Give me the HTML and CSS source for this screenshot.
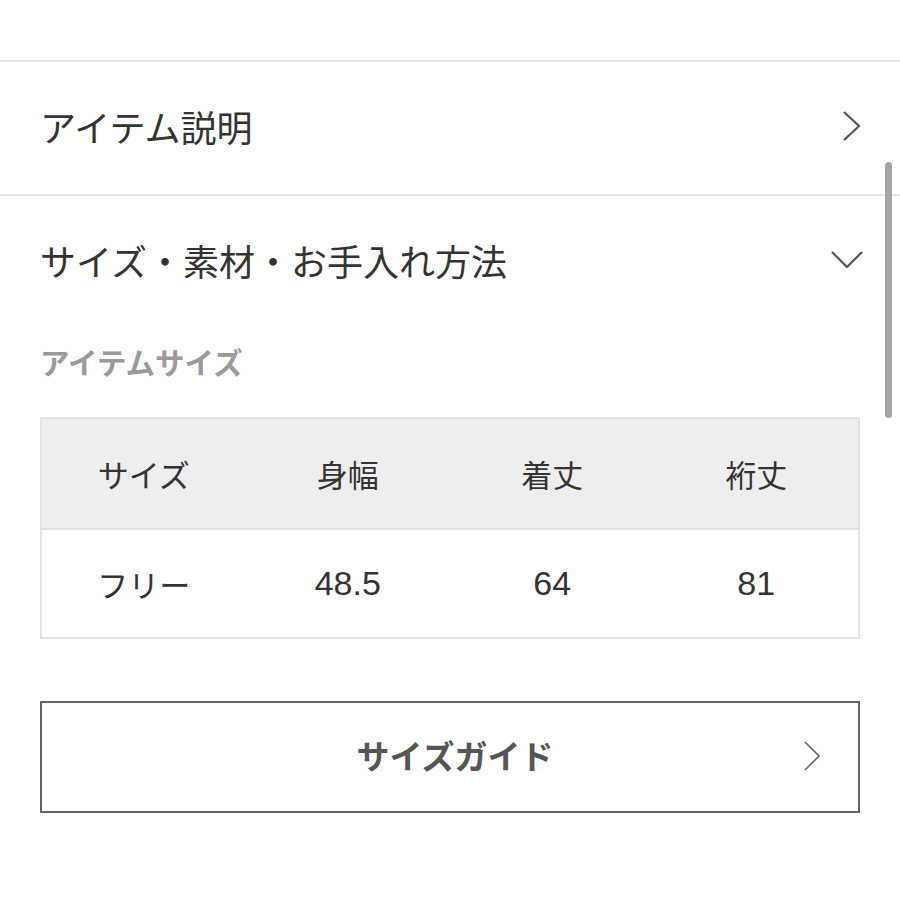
FILE: index.html
```html
<!DOCTYPE html>
<html lang="ja">

<head>
    <meta charset="UTF-8">
    <meta name="viewport" content="width=device-width, initial-scale=1.0">
    <title>アイテム詳細</title>
    <link rel="stylesheet" href="styles.css">
</head>

<body>
    <div class="page">
        <div class="accordion">
            <div class="acc-head">
                <span class="acc-title">アイテム説明</span>
                <svg class="chev-right" width="20" height="32" viewBox="0 0 20 32">
                    <path d="M2 2 L17 16 L2 30" fill="none" stroke="#555" stroke-width="2.2" />
                </svg>
            </div>
        </div>

        <div class="accordion open">
            <div class="acc-head">
                <span class="acc-title">サイズ・素材・お手入れ方法</span>
                <svg class="chev-down" width="34" height="22" viewBox="0 0 34 22">
                    <path d="M2 3 L17 18 L32 3" fill="none" stroke="#555" stroke-width="2.2" />
                </svg>
            </div>

            <div class="acc-body">
                <p class="sub-label">アイテムサイズ</p>

                <table class="size-table">
                    <thead>
                        <tr>
                            <th>サイズ</th>
                            <th>身幅</th>
                            <th>着丈</th>
                            <th>裄丈</th>
                        </tr>
                    </thead>
                    <tbody>
                        <tr>
                            <td>フリー</td>
                            <td class="num">48.5</td>
                            <td class="num">64</td>
                            <td class="num">81</td>
                        </tr>
                    </tbody>
                </table>

                <a href="#" class="guide-btn">
                    <span>サイズガイド</span>
                    <svg class="guide-chev" width="18" height="32" viewBox="0 0 18 32">
                        <path d="M2 2 L16 16 L2 30" fill="none" stroke="#666" stroke-width="1.6" />
                    </svg>
                </a>
            </div>
        </div>
    </div>

    <div class="scrollbar"></div>
</body>

</html>
```

FILE: styles.css
```css
body {
    margin: 0;
    background-color: #fff;
    font-family: "Noto Sans CJK JP", "Noto Sans", sans-serif;
    color: #333;
}

.page {
    padding-top: 60px;
}

.accordion {
    border-top: 2px solid #e6e6e6;
}

.acc-head {
    height: 128px;
    padding: 0 38px 4px 40px;
    display: flex;
    align-items: center;
    justify-content: space-between;
}

.acc-title {
    font-size: 36px;
    line-height: 1;
    color: #333;
}

.chev-down {
    margin-right: -2px;
}

.acc-body {
    padding: 0 40px 60px;
}

.sub-label {
    margin: 13px 0 36px;
    font-size: 29.5px;
    line-height: 40px;
    font-weight: bold;
    color: #9a9a9a;
}

.size-table {
    width: 100%;
    border-collapse: collapse;
    table-layout: fixed;
    border: 2px solid #e4e4e4;
}

.size-table th,
.size-table td {
    text-align: center;
    font-size: 31px;
    font-weight: normal;
    color: #333;
    padding: 0;
}

.size-table th {
    height: 109px;
    background-color: #eeeeee;
    border-bottom: 2px solid #e0e0e0;
}

.size-table td {
    height: 107px;
}

.size-table td.num {
    font-family: "Liberation Sans", Arial, sans-serif;
    font-size: 34px;
}

.guide-btn {
    margin-top: 62px;
    height: 108px;
    border: 2px solid #666;
    display: flex;
    align-items: center;
    justify-content: center;
    position: relative;
    text-decoration: none;
}

.guide-btn span {
    font-size: 33px;
    font-weight: bold;
    color: #555;
    margin: 0 0 5px 10px;
}

.guide-chev {
    position: absolute;
    right: 37px;
    top: 37px;
}

.scrollbar {
    position: absolute;
    left: 885px;
    top: 162px;
    width: 7px;
    height: 256px;
    border-radius: 4px;
    background-color: #a6a6a6;
}
```
